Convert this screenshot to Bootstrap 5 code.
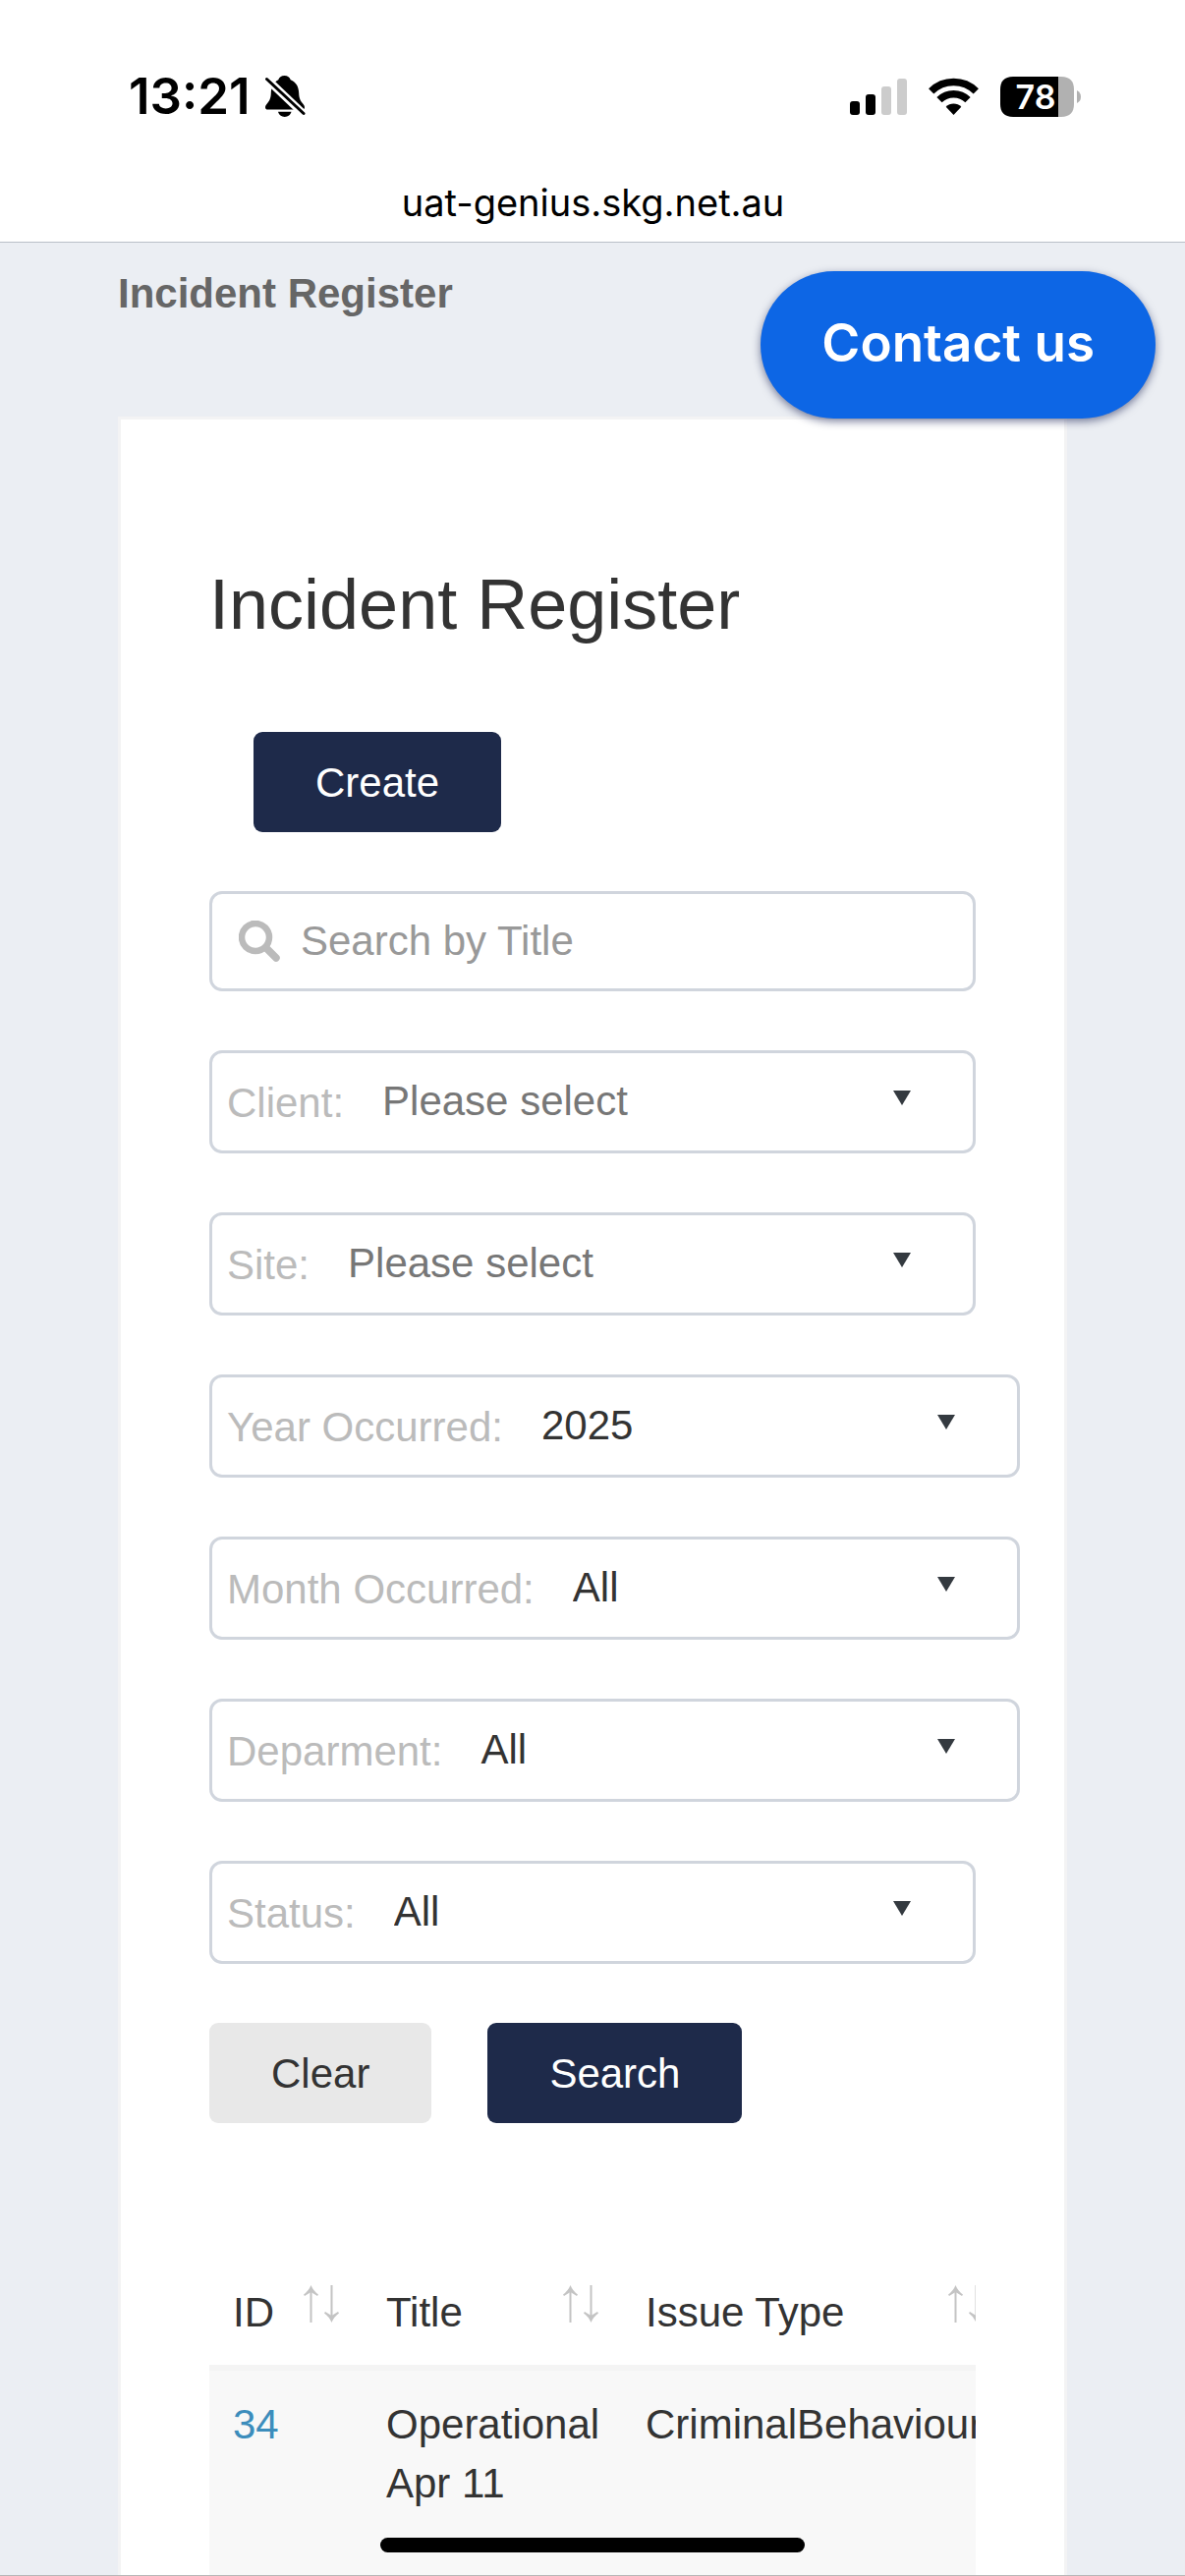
<!DOCTYPE html>
<html lang="en">
<head>
<meta charset="utf-8">
<meta name="viewport" content="width=device-width, initial-scale=1">
<title>Incident Register</title>
<link href="https://cdn.jsdelivr.net/npm/bootstrap@5.3.0/dist/css/bootstrap.min.css" rel="stylesheet">
<style>
  body { font-family: "Liberation Sans", Arial, sans-serif; font-size: 42px; line-height: 60px; color: #333; background: #ebeef3; }
  .ui-font { font-family: Inter, "Noto Sans", sans-serif; }
  .browser-top { padding: 68px 106px 10px 131px; border-bottom: 1px solid #b9c0c8; color: #000; }
  .clock { font-size: 51px; font-weight: 600; gap: 14px; }
  .status-icons { gap: 22px; }
  .address { font-size: 38px; padding-top: 48px; margin-left: -24px; }
  .page-main { padding: 22px 120px 0; }
  .crumb { font-size: 42px; line-height: 60px; font-weight: 700; color: #666; margin-bottom: 95px; }
  .contact-btn { top: 29px; right: 30px; height: 150px; padding: 0 61px 3px; font-size: 53px; font-weight: 600; color: #fff; background: #0d66e5; box-shadow: 0 3px 9px rgba(20, 30, 80, .55); }
  .contact-btn:hover { color: #fff; background: #0b5bd0; }
  .panel { border: 3px solid #f3f3f4; border-bottom: 0; padding: 146px 90px 0; }
  .panel-title { font-size: 72px; line-height: 84px; font-weight: 400; color: #333; margin-bottom: 88px; }
  .filters { gap: 60px; }
  .app-btn { font-size: 42px; line-height: 60px; padding: 22px 63px 20px; border: 0; border-radius: 9px; }
  .app-btn-dark, .app-btn-dark:hover { background: #1e2a4a; color: #fff; }
  .app-btn-light, .app-btn-light:hover { background: #e8e8e8; color: #333; }
  .create-btn { margin-left: 45px; }
  .field-box { border: 3px solid #d0d5dd; border-radius: 13px; background: #fff; }
  .search-box { padding-left: 27px; gap: 21px; }
  .search-box input { font-size: 42px; line-height: 60px; padding: 18px 0; color: #333; }
  .search-box input::placeholder { color: #999; }
  .search-box input:focus, .field-box select:focus { box-shadow: none; }
  .pick-box { padding-left: 15px; }
  .pick-box label { color: #bbb; white-space: nowrap; padding-top: 2px; }
  .pick-box select { font-size: 42px; line-height: 60px; padding: 19px 90px 20px 39px; color: #333; background: transparent url("data:image/svg+xml,%3Csvg xmlns='http://www.w3.org/2000/svg' viewBox='0 0 18 15'%3E%3Cpath fill='%23343a40' d='M0 0h18L9 15z'/%3E%3C/svg%3E") no-repeat right 63px top 38px / 18px 15px; }
  .pick-box select.unset { color: #777; }
  .pick-wide { margin-right: -45px; }
  .actions { gap: 57px; margin-bottom: 138px; }
  .register { width: 1200px; table-layout: fixed; margin: 0; color: #333; }
  .register > :not(caption) > * > * { padding: 25px 24px 23px; border: 0; color: #333; box-shadow: none; background: transparent; }
  .register thead th { font-weight: 400; border-bottom: 6px solid #f4f4f4; }
  .register tbody tr { height: 240px; background: #f8f8f8; }
  .register a { color: #3c8dbc; text-decoration: none; }
  .col-id { width: 156px; }
  .col-title { width: 264px; }
  .col-type { width: 392px; }
  .sort-icon { margin-top: 2px; }
  .home-bar { width: 432px; height: 15px; bottom: 24px; background: #000; }
  .edge-line { height: 1px; background: #b8b8b8; }
</style>
<script src="https://cdn.jsdelivr.net/npm/bootstrap@5.3.0/dist/js/bootstrap.bundle.min.js"></script>
</head>
<body>
<svg class="d-none" aria-hidden="true">
  <symbol id="sort" viewBox="0 0 36 38">
    <path d="M7.500 38V3M28.500 0v35" fill="none" stroke="#c4c4c4" stroke-width="2"/>
    <path d="M7.500 0Q10 6 15 9.500L14 11 7.500 7 1 11 0 9.500Q5 6 7.500 0zM28.500 38Q31 32 36 28.500L35 27 28.500 31 22 27 21 28.500Q26 32 28.500 38z" fill="#c4c4c4"/>
  </symbol>
</svg>
<div class="vh-100 d-flex flex-column overflow-hidden position-relative">
  <header class="browser-top bg-white ui-font">
    <div class="d-flex justify-content-between align-items-center">
      <div class="clock d-flex align-items-center"><span>13:21</span>
        <svg width="42" height="42" viewBox="0 0 42 42" role="img" aria-label="Silent mode">
          <path d="M20.500 0c3.200 0 5.500 1.700 6.200 4.300C32.500 6.600 35 11.500 35.200 18c.2 5 1.300 7.200 3.600 10 1.500 1.800 2.200 3 2.200 4.300 0 1.500-1 2.200-2.500 2.200H3.500C2 34.500 1 33.700 1 32.200c0-1.300.7-2.500 2.200-4.200 2.300-2.800 3.400-5 3.600-10C7 11.500 9.500 6.600 14.300 4.300 15 1.700 17.300 0 20.500 0zM14 36.800h13.500c-.7 3.100-3.400 5.200-6.700 5.200S14.700 39.900 14 36.800z" fill="#000"/>
          <path d="M0 1l42 40" stroke="#fff" stroke-width="8"/>
          <path d="M2.500 3.500l37.500 35" stroke="#000" stroke-width="3" stroke-linecap="round"/>
        </svg>
      </div>
      <div class="status-icons d-flex align-items-center">
        <svg width="58" height="38" viewBox="0 0 58 38" role="img" aria-label="Signal">
          <rect x="0" y="24" width="10" height="14" rx="3"/><rect x="16" y="17" width="10" height="21" rx="3"/>
          <rect x="32" y="9" width="10" height="29" rx="3" fill="#ccc"/><rect x="48" y="1" width="10" height="37" rx="3" fill="#ccc"/>
        </svg>
        <svg width="51" height="38" viewBox="0 0 51 38" role="img" aria-label="Wi-Fi">
          <g fill="none" stroke="#000" stroke-width="7.500"><path d="M2.700 13.800a32.500 32.500 0 0 1 45.600 0"/><path d="M11 22.700a20.600 20.600 0 0 1 29 0"/></g>
          <path d="M17.700 29.800a11 11 0 0 1 15.600 0L25.500 38z"/>
        </svg>
        <svg width="82" height="41" viewBox="0 0 82 41" role="img" aria-label="Battery 78%">
          <path d="M59 0h3c9 0 13 5 13 13v15c0 8-4 13-13 13h-3z" fill="#b1b1b1"/>
          <path d="M13 0h46v41H13C4 41 0 36 0 28V13C0 5 4 0 13 0z"/>
          <path d="M78 14q4 2 4 6.500T78 27z" fill="#b1b1b1"/>
          <text x="36" y="33" font-size="34" font-weight="600" fill="#fff" text-anchor="middle">78</text>
        </svg>
      </div>
    </div>
    <div class="address text-center">uat-genius.skg.net.au</div>
  </header>

  <main class="page-main flex-grow-1 d-flex flex-column position-relative">
    <div class="crumb">Incident Register</div>
    <button type="button" class="contact-btn btn rounded-pill position-absolute ui-font">Contact us</button>

    <section class="panel bg-white flex-grow-1">
      <h1 class="panel-title">Incident Register</h1>
      <form class="filters d-flex flex-column" onsubmit="return false">
        <div class="d-flex"><button type="button" class="btn app-btn app-btn-dark create-btn">Create</button></div>

        <div class="field-box search-box d-flex align-items-center">
          <svg class="flex-shrink-0" width="42" height="42" viewBox="0 0 42 42" aria-hidden="true">
            <circle cx="17" cy="17" r="14" fill="none" stroke="#bbb" stroke-width="6.500"/>
            <path d="M29 29L38 38" stroke="#bbb" stroke-width="7.500" stroke-linecap="round"/>
          </svg>
          <label for="q" class="visually-hidden">Search by Title</label>
          <input id="q" type="text" class="form-control border-0 bg-transparent" placeholder="Search by Title">
        </div>

        <div class="field-box pick-box d-flex align-items-center">
          <label for="client">Client:</label>
          <select id="client" class="form-select border-0 unset"><option>Please select</option></select>
        </div>
        <div class="field-box pick-box d-flex align-items-center">
          <label for="site">Site:</label>
          <select id="site" class="form-select border-0 unset"><option>Please select</option></select>
        </div>
        <div class="field-box pick-box pick-wide d-flex align-items-center">
          <label for="year">Year Occurred:</label>
          <select id="year" class="form-select border-0"><option>2025</option></select>
        </div>
        <div class="field-box pick-box pick-wide d-flex align-items-center">
          <label for="month">Month Occurred:</label>
          <select id="month" class="form-select border-0"><option>All</option></select>
        </div>
        <div class="field-box pick-box pick-wide d-flex align-items-center">
          <label for="dept">Deparment:</label>
          <select id="dept" class="form-select border-0"><option>All</option></select>
        </div>
        <div class="field-box pick-box d-flex align-items-center">
          <label for="status">Status:</label>
          <select id="status" class="form-select border-0"><option>All</option></select>
        </div>

        <div class="actions d-flex">
          <button type="reset" class="btn app-btn app-btn-light">Clear</button>
          <button type="submit" class="btn app-btn app-btn-dark">Search</button>
        </div>
      </form>

      <div class="overflow-hidden">
        <table class="table register">
          <colgroup><col class="col-id"><col class="col-title"><col class="col-type"><col></colgroup>
          <thead>
            <tr>
              <th scope="col"><div class="d-flex justify-content-between align-items-start">ID <svg class="sort-icon" width="36" height="38" aria-hidden="true"><use href="#sort"/></svg></div></th>
              <th scope="col"><div class="d-flex justify-content-between align-items-start">Title <svg class="sort-icon" width="36" height="38" aria-hidden="true"><use href="#sort"/></svg></div></th>
              <th scope="col"><div class="d-flex justify-content-between align-items-start">Issue Type <svg class="sort-icon" width="36" height="38" aria-hidden="true"><use href="#sort"/></svg></div></th>
              <th></th>
            </tr>
          </thead>
          <tbody>
            <tr><td><a href="#">34</a></td><td>Operational Apr 11</td><td>CriminalBehaviour</td><td></td></tr>
          </tbody>
        </table>
      </div>
    </section>
  </main>
  <div class="home-bar rounded-pill position-absolute start-50 translate-middle-x"></div>
  <div class="edge-line position-absolute bottom-0 w-100"></div>
</div>
</body>
</html>
